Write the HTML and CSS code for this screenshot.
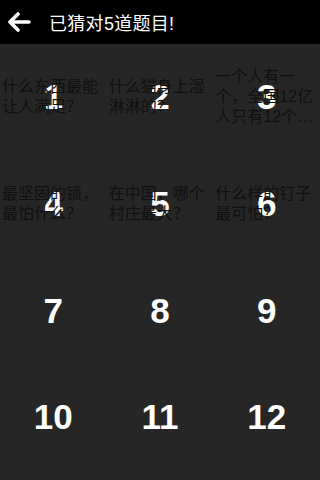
FILE: index.html
```html
<!doctype html>
<html lang="zh-CN">
  <head>
    <meta charset="UTF-8" />
    <meta name="viewport" content="width=device-width, initial-scale=1.0" />
    <title>已猜对5道题目!</title>
    <link rel="stylesheet" href="styles.css">
  </head>
  <body>
    <header class="top-bar">
      <button type="button" class="back-btn" aria-label="返回">
        <svg width="24" height="20" viewBox="0 0 24 20">
          <path d="M22 10H3M11 2L3 10l8 8" fill="none" stroke="#fff" stroke-width="3.6" stroke-linecap="round" stroke-linejoin="round" />
        </svg>
      </button>
      <h1 class="title">已猜对5道题目!</h1>
    </header>

    <main class="level-grid">
      <div class="level">
        <span class="level-num">1</span>
        <span class="level-question">什么东西最能让人满足？</span>
      </div>
      <div class="level">
        <span class="level-num">2</span>
        <span class="level-question">什么猫身上湿淋淋的？</span>
      </div>
      <div class="level">
        <span class="level-num">3</span>
        <span class="level-question">一个人有一个，全国12亿人只有12个…</span>
      </div>
      <div class="level">
        <span class="level-num">4</span>
        <span class="level-question">最坚固的锁，最怕什么？</span>
      </div>
      <div class="level">
        <span class="level-num">5</span>
        <span class="level-question">在中国，哪个村庄最大？</span>
      </div>
      <div class="level">
        <span class="level-num">6</span>
        <span class="level-question">什么样的钉子最可怕？</span>
      </div>
      <div class="level"><span class="level-num">7</span></div>
      <div class="level"><span class="level-num">8</span></div>
      <div class="level"><span class="level-num">9</span></div>
      <div class="level"><span class="level-num">10</span></div>
      <div class="level"><span class="level-num">11</span></div>
      <div class="level"><span class="level-num">12</span></div>
    </main>
  </body>
</html>
```

FILE: styles.css
```css
html,
body {
  margin: 0;
  padding: 0;
  height: 100%;
}
body {
  background: #262626;
  font-family: "Liberation Sans", "Noto Sans CJK SC", sans-serif;
  overflow: hidden;
}
.top-bar {
  height: 44px;
  background: #000;
  display: flex;
  align-items: center;
}
.back-btn {
  width: 40px;
  height: 44px;
  padding: 0 0 0 7px;
  margin: 0;
  border: none;
  background: none;
  display: flex;
  align-items: center;
}
.title {
  margin: 0 0 0 9px;
  color: #fff;
  font-size: 18px;
  font-weight: normal;
  letter-spacing: 0.3px;
}
.level-grid {
  display: grid;
  grid-template-columns: repeat(3, 1fr);
  grid-auto-rows: 106.67px;
}
.level {
  display: grid;
  overflow: hidden;
}
.level-num,
.level-question {
  grid-area: 1 / 1;
}
.level-num {
  place-self: center;
  color: #fff;
  font-size: 35px;
  font-weight: bold;
}
.level-question {
  align-self: center;
  padding: 0 1px 0 2px;
  color: #111;
  font-size: 16px;
  line-height: 20px;
}
```
